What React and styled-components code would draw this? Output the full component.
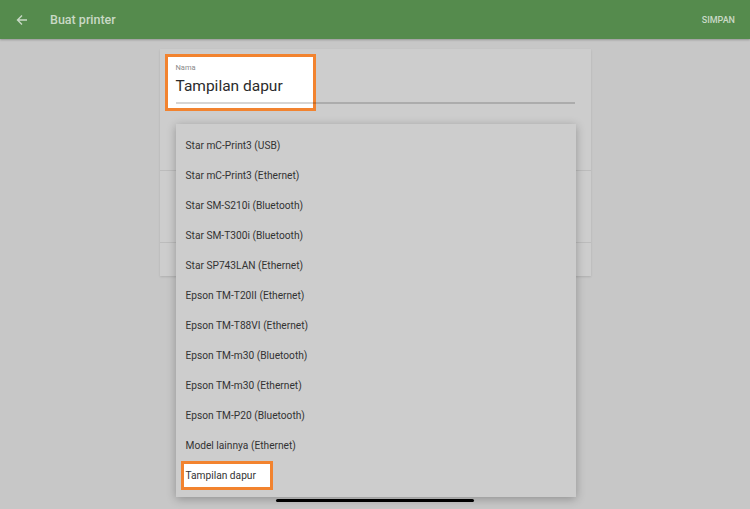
import React from 'react'
import styled, { createGlobalStyle } from 'styled-components'

const models = [
  'Star mC-Print3 (USB)',
  'Star mC-Print3 (Ethernet)',
  'Star SM-S210i (Bluetooth)',
  'Star SM-T300i (Bluetooth)',
  'Star SP743LAN (Ethernet)',
  'Epson TM-T20II (Ethernet)',
  'Epson TM-T88VI (Ethernet)',
  'Epson TM-m30 (Bluetooth)',
  'Epson TM-m30 (Ethernet)',
  'Epson TM-P20 (Bluetooth)',
  'Model lainnya (Ethernet)',
]

export default function App() {
  return (
    <Screen>
      <GlobalStyle />
      <AppBar>
        <BackButton>
          <svg width="12" height="12" viewBox="0 0 12 12" fill="none">
            <path d="M11 6H1.5M6 1.5L1.5 6L6 10.5" stroke="#c9d9c6" strokeWidth="1.4" />
          </svg>
        </BackButton>
        <Title>Buat printer</Title>
        <Action>SIMPAN</Action>
      </AppBar>

      <Content>
        <Card>
          <Section $height={121}>
            <Field>
              <Spotlight />
              <Label>Nama</Label>
              <Value>Tampilan dapur</Value>
              <Underline />
            </Field>
          </Section>
          <Section $height={72} />
          <Section $height={34} />

          <Menu>
            {models.map((m) => (
              <Item key={m}>{m}</Item>
            ))}
            <Item>
              <Highlight>Tampilan dapur</Highlight>
            </Item>
          </Menu>
        </Card>
      </Content>

      <HomeBar />
    </Screen>
  )
}

const GlobalStyle = createGlobalStyle`
  body {
    margin: 0;
    background: #c7c7c7;
    font-family: Roboto, "Noto Sans", sans-serif;
  }
`

const Screen = styled.div`
  position: relative;
  height: 509px;
  overflow: hidden;
  display: flex;
  flex-direction: column;
`

const AppBar = styled.div`
  height: 39px;
  flex-shrink: 0;
  background: #558b4d;
  display: flex;
  align-items: center;
  padding: 0 15px 0 16px;
  box-shadow: 0 1px 2px rgba(0, 0, 0, 0.25);
  position: relative;
  z-index: 1;
`

const BackButton = styled.div`
  width: 13px;
  display: flex;
  align-items: center;
`

const Title = styled.div`
  margin-left: 21px;
  color: #c9d9c6;
  font-size: 12.5px;
  font-weight: 500;
  flex: 1;
`

const Action = styled.div`
  color: #c9d9c6;
  font-size: 9px;
  font-weight: 500;
`

const Content = styled.div`
  display: flex;
  justify-content: center;
  padding-top: 10px;
`

const Card = styled.div`
  position: relative;
  width: 431px;
  background: #cdcdcd;
  box-shadow: 0 1px 2px rgba(0, 0, 0, 0.12);
`

const Section = styled.div`
  height: ${(p) => p.$height}px;
  box-sizing: border-box;
  padding: 14px 16px 0;
  & + & {
    border-top: 1px solid #bcbcbc;
  }
`

const Field = styled.div`
  position: relative;
  display: flex;
  flex-direction: column;
`

const Spotlight = styled.div`
  position: absolute;
  left: -11px;
  top: -9px;
  width: 151px;
  height: 57px;
  box-sizing: border-box;
  border: 3px solid #f2832f;
  background: #fff;
`

const Label = styled.div`
  position: relative;
  font-size: 7.5px;
  line-height: 10px;
  color: #8a8a8a;
`

const Value = styled.div`
  position: relative;
  margin-top: 3px;
  font-size: 15.5px;
  line-height: 20px;
  color: #2b2b2b;
`

const Underline = styled.div`
  position: relative;
  margin-top: 6px;
  height: 2px;
  background: rgba(0, 0, 0, 0.16);
`

const Menu = styled.div`
  position: absolute;
  left: 16px;
  top: 75px;
  width: 400px;
  padding: 6px 0 7px;
  background: #cdcdcd;
  box-shadow: 0 2px 9px rgba(0, 0, 0, 0.28);
`

const Item = styled.div`
  height: 30px;
  display: flex;
  align-items: center;
  padding-left: 10px;
  font-size: 10.2px;
  color: #333;
`

const Highlight = styled.span`
  display: inline-block;
  margin-left: -5px;
  padding: 0 14px 0 2px;
  line-height: 23px;
  border: 3px solid #f2832f;
  background: #fff;
`

const HomeBar = styled.div`
  position: absolute;
  left: 276px;
  bottom: 7px;
  width: 198px;
  height: 3px;
  border-radius: 2px;
  background: #000;
`
